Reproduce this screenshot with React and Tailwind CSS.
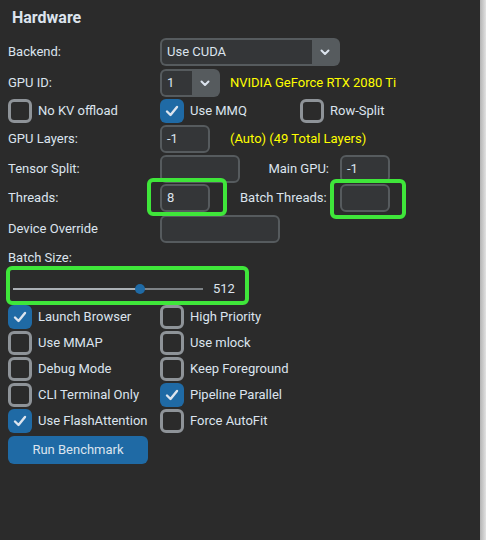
import React from "react";

const font = { fontFamily: "Roboto, 'Liberation Sans', sans-serif" };

function Entry({ w, value = "" }) {
  return (
    <div
      className={`${w} h-[28px] shrink-0 rounded-[6px] border-2 border-[#565b5e] bg-[#343638] flex items-center pl-[5px] text-[13px] text-[#dce4ee]`}
    >
      {value}
    </div>
  );
}

function Chevron() {
  return (
    <svg width="10" height="7" viewBox="0 0 10 7">
      <path d="M1.5 1.5 L5 5 L8.5 1.5" fill="none" stroke="#dce4ee" strokeWidth="2" strokeLinecap="round" strokeLinejoin="round" />
    </svg>
  );
}

function Combo({ w, value }) {
  return (
    <div className={`${w} h-[28px] shrink-0 rounded-[6px] bg-[#565b5e] flex p-[2px]`}>
      <div className="flex-1 bg-[#343638] rounded-l-[4px] flex items-center pl-[5px] text-[13px] text-[#dce4ee]">
        {value}
      </div>
      <div className="w-[26px] flex items-center justify-center">
        <Chevron />
      </div>
    </div>
  );
}

function Check({ checked, label }) {
  return (
    <div className="flex items-center h-[24px]">
      {checked ? (
        <div className="w-[24px] h-[24px] rounded-[6px] bg-[#1f6aa5] flex items-center justify-center shrink-0">
          <svg width="14" height="12" viewBox="0 0 14 12">
            <path d="M2 6.5 L5.5 10 L12 2" fill="none" stroke="#dce4ee" strokeWidth="2.4" strokeLinecap="round" strokeLinejoin="round" />
          </svg>
        </div>
      ) : (
        <div className="w-[24px] h-[24px] rounded-[6px] border-[3px] border-[#8e9398] shrink-0" />
      )}
      <span className="ml-[6px] text-[13px] text-[#dce4ee] whitespace-nowrap">{label}</span>
    </div>
  );
}

function Label({ children }) {
  return (
    <div className="w-[152px] shrink-0 text-[13px] text-[#dce4ee] whitespace-nowrap">{children}</div>
  );
}

// Highlight ring drawn over a group of controls
function Ring({ className }) {
  return (
    <div className={`absolute border-[4px] border-[#3fe63a] rounded-[6px] pointer-events-none ${className}`} />
  );
}

export default function App() {
  return (
    <div className="flex w-[486px] h-[540px]" style={font}>
      <div className="relative w-[480px] h-[540px] bg-[#2b2b2b] flex flex-col pl-[8px]">
        <div className="h-[36px] flex items-center pl-[4px] text-[16px] font-bold text-[#dce4ee]">
          Hardware
        </div>

        <div className="mt-[2px] flex items-center h-[28px]">
          <Label>Backend:</Label>
          <Combo w="w-[180px]" value="Use CUDA" />
        </div>

        <div className="mt-[3px] flex items-center h-[28px]">
          <Label>GPU ID:</Label>
          <Combo w="w-[60px]" value="1" />
          <span className="ml-[10px] text-[13px] text-[#ffff00] whitespace-nowrap">
            NVIDIA GeForce RTX 2080 Ti
          </span>
        </div>

        <div className="mt-[2px] flex items-center h-[24px]">
          <div className="w-[152px] shrink-0">
            <Check label="No KV offload" />
          </div>
          <div className="w-[140px] shrink-0">
            <Check checked label="Use MMQ" />
          </div>
          <Check label="Row-Split" />
        </div>

        <div className="mt-[2px] flex items-center h-[28px]">
          <Label>GPU Layers:</Label>
          <Entry w="w-[50px]" value="-1" />
          <span className="ml-[20px] text-[13px] text-[#ffff00] whitespace-nowrap">
            (Auto) (49 Total Layers)
          </span>
        </div>

        <div className="mt-[2px] flex items-center h-[28px]">
          <Label>Tensor Split:</Label>
          <Entry w="w-[80px]" />
          <div className="w-[100px] shrink-0 text-right pr-[11px] text-[13px] text-[#dce4ee]">Main GPU:</div>
          <Entry w="w-[50px]" value="-1" />
        </div>

        <div className="mt-[1px] flex items-center h-[28px]">
          <Label>Threads:</Label>
          <Entry w="w-[50px]" value="8" />
          <div className="w-[130px] shrink-0 pl-[30px] text-[13px] text-[#dce4ee] whitespace-nowrap">
            Batch Threads:
          </div>
          <Entry w="w-[50px]" />
        </div>

        <div className="mt-[3px] flex items-center h-[28px]">
          <Label>Device Override</Label>
          <Entry w="w-[120px]" />
        </div>

        <div className="mt-[6px] h-[18px] flex items-center text-[13px] text-[#dce4ee]">Batch Size:</div>

        <div className="mt-[10px] h-[24px] flex items-center">
          <div className="relative w-[190px] h-[10px] ml-[5px] flex items-center">
            <div className="h-[2px] w-[127px] bg-[#aab0b5]" />
            <div className="h-[2px] flex-1 bg-[#7d8286]" />
            <div className="absolute left-[122px] top-0 w-[10px] h-[10px] rounded-full bg-[#1f6aa5]" />
          </div>
          <span className="ml-[10px] text-[13px] text-[#dce4ee]">512</span>
        </div>

        <div className="mt-[4px] grid grid-cols-[152px_1fr] gap-y-[2px]">
          <Check checked label="Launch Browser" />
          <Check label="High Priority" />
          <Check label="Use MMAP" />
          <Check label="Use mlock" />
          <Check label="Debug Mode" />
          <Check label="Keep Foreground" />
          <Check label="CLI Terminal Only" />
          <Check checked label="Pipeline Parallel" />
          <Check checked label="Use FlashAttention" />
          <Check label="Force AutoFit" />
        </div>

        <button className="mt-[3px] w-[140px] h-[28px] rounded-[6px] bg-[#1f6aa5] text-[13px] text-[#dce4ee] flex items-center justify-center">
          Run Benchmark
        </button>

        <Ring className="left-[147px] top-[178px] w-[80px] h-[38px]" />
        <Ring className="left-[330px] top-[179px] w-[76px] h-[40px]" />
        <Ring className="left-[6px] top-[266px] w-[243px] h-[39px]" />
      </div>
      <div className="w-[6px] h-[540px] bg-gradient-to-r from-[#b4b4b4] to-[#e2e2e2]" />
    </div>
  );
}
